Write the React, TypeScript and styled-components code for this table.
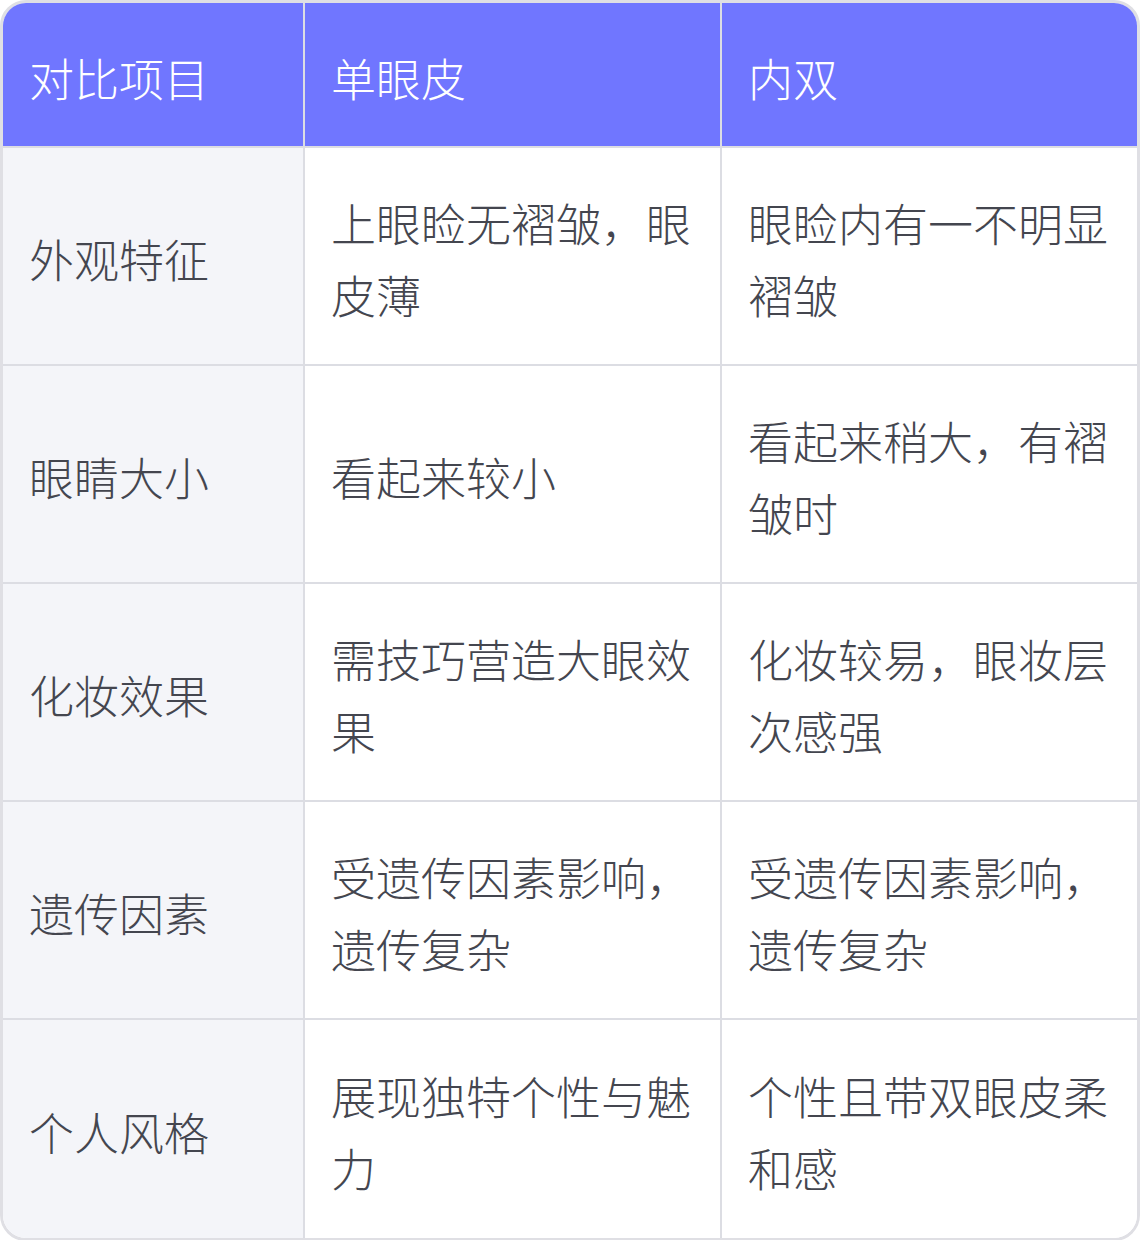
import React from 'react'
import styled, { createGlobalStyle } from 'styled-components'

const GlobalStyle = createGlobalStyle`
  html, body {
    margin: 0;
    padding: 0;
    background: #ffffff;
  }
  body {
    font-family: 'Noto Sans CJK SC Light', 'Noto Sans CJK SC DemiLight', 'Noto Sans CJK SC', 'Noto Sans', sans-serif;
  }
`

const Frame = styled.div`
  width: 1140px;
  box-sizing: border-box;
  border: 3px solid #dfdfe4;
  border-radius: 26px;
  overflow: hidden;
`

const Table = styled.table`
  width: 100%;
  border-collapse: separate;
  border-spacing: 0;
  table-layout: fixed;
`

const Col = styled.col<{ $w?: number }>`
  width: ${(p) => (p.$w ? `${p.$w}px` : 'auto')};
`

const HeadCell = styled.th`
  box-sizing: border-box;
  background: #7076ff;
  color: #ffffff;
  font-weight: 200;
  font-size: 45px;
  line-height: 72px;
  text-align: left;
  padding: 39px 26px 32px;
  border-left: 2px solid #dcdde3;
  border-bottom: 2px solid #dcdde3;

  &:first-child {
    border-left: none;
  }
`

const Cell = styled.td<{ $label?: boolean }>`
  box-sizing: border-box;
  background: ${(p) => (p.$label ? '#f4f5f9' : '#ffffff')};
  color: #44464f;
  font-weight: 200;
  font-size: 45px;
  line-height: 72px;
  padding: 39px 26px 33px;
  height: 218px;
  vertical-align: middle;
  border-left: 2px solid #dcdde3;
  border-bottom: 2px solid #dcdde3;
  word-break: break-all;

  &:first-child {
    border-left: none;
  }

  tr:last-child > & {
    border-bottom: none;
  }
`

const rows = [
  ['外观特征', '上眼睑无褶皱，眼皮薄', '眼睑内有一不明显褶皱'],
  ['眼睛大小', '看起来较小', '看起来稍大，有褶皱时'],
  ['化妆效果', '需技巧营造大眼效果', '化妆较易，眼妆层次感强'],
  ['遗传因素', '受遗传因素影响，遗传复杂', '受遗传因素影响，遗传复杂'],
  ['个人风格', '展现独特个性与魅力', '个性且带双眼皮柔和感'],
]

export default function App() {
  return (
    <>
      <GlobalStyle />
      <Frame>
        <Table>
          <colgroup>
            <Col $w={300} />
            <Col $w={417} />
            <Col />
          </colgroup>
          <thead>
            <tr>
              <HeadCell>对比项目</HeadCell>
              <HeadCell>单眼皮</HeadCell>
              <HeadCell>内双</HeadCell>
            </tr>
          </thead>
          <tbody>
            {rows.map((r) => (
              <tr key={r[0]}>
                <Cell $label>{r[0]}</Cell>
                <Cell>{r[1]}</Cell>
                <Cell>{r[2]}</Cell>
              </tr>
            ))}
          </tbody>
        </Table>
      </Frame>
    </>
  )
}
